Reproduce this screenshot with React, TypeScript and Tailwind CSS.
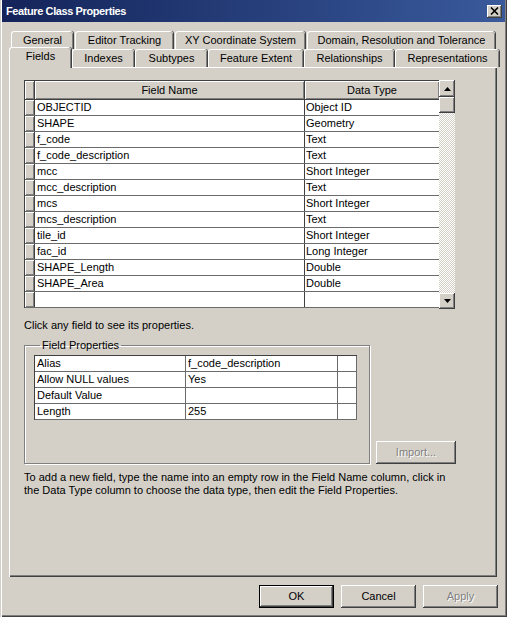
import React from "react";

const raised =
  "bg-[#d4d0c8] shadow-[inset_-1px_-1px_0_#404040,inset_1px_1px_0_#ffffff,inset_-2px_-2px_0_#808080,inset_2px_2px_0_#d4d0c8]";

type Tab = { label: string; w: string };

const topTabs: Tab[] = [
  { label: "General", w: "w-[62px]" },
  { label: "Editor Tracking", w: "w-[98px]" },
  { label: "XY Coordinate System", w: "w-[130px]" },
  { label: "Domain, Resolution and Tolerance", w: "w-[188px]" },
];

const bottomTabs: Tab[] = [
  { label: "Indexes", w: "w-[62px]" },
  { label: "Subtypes", w: "w-[72px]" },
  { label: "Feature Extent", w: "w-[95px]" },
  { label: "Relationships", w: "w-[90px]" },
  { label: "Representations", w: "w-[104px]" },
];

const fields: [string, string][] = [
  ["OBJECTID", "Object ID"],
  ["SHAPE", "Geometry"],
  ["f_code", "Text"],
  ["f_code_description", "Text"],
  ["mcc", "Short Integer"],
  ["mcc_description", "Text"],
  ["mcs", "Short Integer"],
  ["mcs_description", "Text"],
  ["tile_id", "Short Integer"],
  ["fac_id", "Long Integer"],
  ["SHAPE_Length", "Double"],
  ["SHAPE_Area", "Double"],
  ["", ""],
];

const props: [string, string][] = [
  ["Alias", "f_code_description"],
  ["Allow NULL values", "Yes"],
  ["Default Value", ""],
  ["Length", "255"],
];

function TabButton({ label, w, className = "" }: Tab & { className?: string }) {
  return (
    <div
      className={`${w} ${className} flex items-center justify-center rounded-t-[3px] border-t border-l border-white bg-[#d4d0c8] shadow-[inset_-1px_0_0_#808080,1px_0_0_#404040] whitespace-nowrap`}
    >
      {label}
    </div>
  );
}

function Button({
  label,
  disabled,
  isDefault,
  w = "w-[75px]",
}: {
  label: string;
  disabled?: boolean;
  isDefault?: boolean;
  w?: string;
}) {
  return (
    <div className={`${w} h-[23px] ${isDefault ? "border border-black" : ""} flex`}>
      <div
        className={`flex-1 flex items-center justify-center ${raised} ${
          disabled ? "text-[#808080] [text-shadow:1px_1px_0_#ffffff]" : "text-black"
        }`}
      >
        {label}
      </div>
    </div>
  );
}

export default function App() {
  return (
    <div className="w-[507px] h-[617px] bg-[#d4d0c8] flex flex-col px-[2px] font-['Liberation_Sans',Arial,sans-serif] text-[11px] leading-[13px] text-black shadow-[inset_1px_0_0_#d4d0c8,inset_2px_0_0_#ffffff,inset_-1px_-1px_0_#404040,inset_-2px_-2px_0_#808080] overflow-hidden">
      {/* Title bar */}
      <div className="h-[22px] flex items-center justify-between pl-[4px] pr-[3px] bg-gradient-to-r from-[#14245a] to-[#3a5a9c]">
        <span className="text-white font-bold text-[11px] tracking-[-0.4px]">Feature Class Properties</span>
        <div className={`w-[15px] h-[13px] flex items-center justify-center ${raised}`}>
          <svg width="9" height="8" viewBox="0 0 9 8">
            <path d="M1 0.5 L8 7.5 M8 0.5 L1 7.5" stroke="#000" strokeWidth="1.6" />
          </svg>
        </div>
      </div>

      {/* Tabs */}
      <div className="mt-[9px] flex gap-[2px] pl-[9px] h-[18px]">
        {topTabs.map((t) => (
          <TabButton key={t.label} {...t} />
        ))}
      </div>
      <div className="flex items-end h-[18px] pl-[7px]">
        <TabButton label="Fields" w="w-[62px]" className="h-[21px] -mb-px relative z-10 pb-[3px]" />
        {bottomTabs.map((t) => (
          <TabButton key={t.label} {...t} className="h-[18px] ml-px" />
        ))}
      </div>

      {/* Panel */}
      <div className="ml-[7px] w-[488px] h-[510px] border-t border-l border-white shadow-[inset_-1px_-1px_0_#404040,inset_-2px_-2px_0_#808080] pl-[14px] pt-[12px] flex flex-col">
        {/* Grid */}
        <div className="flex h-[228px]">
          <div className="w-[415px] border-t border-l border-[#404040] bg-white flex flex-col">
            <div className="h-[19px] flex border-b border-[#404040]">
              <div className="w-[10px] border-r border-[#404040] bg-[#d4d0c8] shadow-[inset_1px_1px_0_#fff,inset_-1px_-1px_0_#808080]" />
              <div className="w-[270px] border-r border-[#404040] bg-[#d4d0c8] shadow-[inset_1px_1px_0_#fff,inset_-1px_-1px_0_#808080] flex items-center justify-center">
                Field Name
              </div>
              <div className="flex-1 bg-[#d4d0c8] shadow-[inset_1px_1px_0_#fff,inset_-1px_-1px_0_#808080] flex items-center justify-center">
                Data Type
              </div>
            </div>
            {fields.map(([name, type], i) => (
              <div key={i} className="h-[16px] flex border-b border-[#6b6b6b]">
                <div className="w-[10px] border-r border-[#404040] bg-[#d4d0c8] shadow-[inset_1px_1px_0_#fff,inset_-1px_-1px_0_#808080]" />
                <div className="w-[270px] border-r border-[#404040] px-[2px] flex items-center">{name}</div>
                <div className="flex-1 px-[1px] flex items-center">{type}</div>
              </div>
            ))}
          </div>
          {/* Scrollbar */}
          <div className="w-[16px] h-[229px] flex flex-col">
            <div className={`h-[17px] flex items-center justify-center ${raised}`}>
              <svg width="7" height="4" viewBox="0 0 7 4">
                <path d="M3.5 0 L7 4 L0 4 Z" fill="#000" />
              </svg>
            </div>
            <div className={`h-[16px] ${raised}`} />
            <div className="flex-1 bg-[repeating-conic-gradient(#d4d0c8_0_25%,#ffffff_0_50%)] bg-[length:2px_2px]" />
            <div className={`h-[16px] flex items-center justify-center ${raised}`}>
              <svg width="7" height="4" viewBox="0 0 7 4">
                <path d="M0 0 L7 0 L3.5 4 Z" fill="#000" />
              </svg>
            </div>
          </div>
        </div>

        <p className="mt-[11px]">Click any field to see its properties.</p>

        {/* Field properties + import */}
        <div className="mt-[7px] flex items-end gap-[6px]">
          <fieldset className="w-[346px] h-[125px] border border-[#808080] shadow-[1px_1px_0_#ffffff,inset_1px_1px_0_#ffffff] m-0 p-0 pl-[9px]">
            <legend className="ml-[6px] px-[2px]">Field Properties</legend>
            <div className="mt-[3px] w-[323px] border-t border-l border-[#404040] bg-white">
              {props.map(([k, v]) => (
                <div key={k} className="h-[16px] flex border-b border-r border-[#6b6b6b]">
                  <div className="w-[151px] border-r border-[#6b6b6b] px-[2px] flex items-center">{k}</div>
                  <div className="w-[152px] border-r border-[#6b6b6b] px-[2px] flex items-center">{v}</div>
                  <div className="flex-1" />
                </div>
              ))}
            </div>
          </fieldset>
          <Button label="Import..." disabled w="w-[80px]" />
        </div>

        <p className="mt-[7px]">
          To add a new field, type the name into an empty row in the Field Name column, click in
          <br />
          the Data Type column to choose the data type, then edit the Field Properties.
        </p>
      </div>

      {/* Dialog buttons */}
      <div className="mt-[8px] flex justify-end gap-[7px] pr-[7px]">
        <Button label="OK" isDefault />
        <Button label="Cancel" />
        <Button label="Apply" disabled />
      </div>
    </div>
  );
}
